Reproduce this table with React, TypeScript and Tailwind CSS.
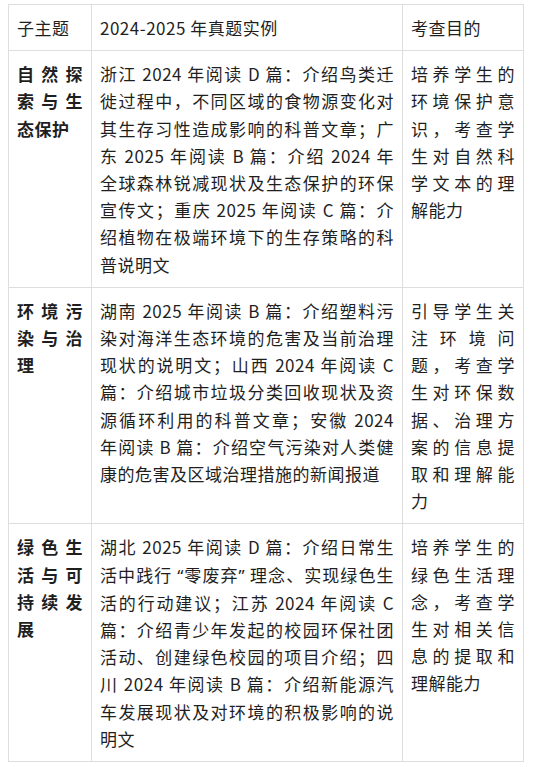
import type { ReactNode } from "react";

type Row = {
  topic: ReactNode[];
  examples: ReactNode[];
  goal: ReactNode[];
};

// latin-width curly quotes (the CJK font draws them full width)
const Q = ({ children }: { children: ReactNode }) => (
  <span style={{ fontFamily: '"Noto Sans", sans-serif' }}>{children}</span>
);

const rows: Row[] = [
  {
    topic: ["自然探", "索与生", "态保护"],
    examples: [
      "浙江 2024 年阅读 D 篇：介绍鸟类迁",
      "徙过程中，不同区域的食物源变化对",
      "其生存习性造成影响的科普文章；广",
      "东 2025 年阅读 B 篇：介绍 2024 年",
      "全球森林锐减现状及生态保护的环保",
      "宣传文；重庆 2025 年阅读 C 篇：介",
      "绍植物在极端环境下的生存策略的科",
      "普说明文",
    ],
    goal: ["培养学生的", "环境保护意", "识，考查学", "生对自然科", "学文本的理", "解能力"],
  },
  {
    topic: ["环境污", "染与治", "理"],
    examples: [
      "湖南 2025 年阅读 B 篇：介绍塑料污",
      "染对海洋生态环境的危害及当前治理",
      "现状的说明文；山西 2024 年阅读 C",
      "篇：介绍城市垃圾分类回收现状及资",
      "源循环利用的科普文章；安徽 2024",
      "年阅读 B 篇：介绍空气污染对人类健",
      "康的危害及区域治理措施的新闻报道",
    ],
    goal: ["引导学生关", "注环境问", "题，考查学", "生对环保数", "据、治理方", "案的信息提", "取和理解能", "力"],
  },
  {
    topic: ["绿色生", "活与可", "持续发", "展"],
    examples: [
      "湖北 2025 年阅读 D 篇：介绍日常生",
      <>
        活中践行 <Q>“</Q>零废弃<Q>”</Q> 理念、实现绿色生
      </>,
      "活的行动建议；江苏 2024 年阅读 C",
      "篇：介绍青少年发起的校园环保社团",
      "活动、创建绿色校园的项目介绍；四",
      "川 2024 年阅读 B 篇：介绍新能源汽",
      "车发展现状及对环境的积极影响的说",
      "明文",
    ],
    goal: ["培养学生的", "绿色生活理", "念，考查学", "生对相关信", "息的提取和", "理解能力"],
  },
];

// each wrapped line is its own block so the justified spacing matches
function Lines({ lines }: { lines: ReactNode[] }) {
  return (
    <>
      {lines.map((line, i) => (
        <div
          key={i}
          className={
            i < lines.length - 1
              ? "whitespace-nowrap text-justify [text-align-last:justify]"
              : "whitespace-nowrap text-left"
          }
        >
          {line}
        </div>
      ))}
    </>
  );
}

const cell = "border border-[#dedede] px-2 py-[9px] align-top";

export default function App() {
  return (
    <div
      className="min-h-[767px] bg-white pl-2 pt-1 text-[17px] leading-[27.2px] tracking-[0.5px] text-[#1f1f1f]"
      style={{ fontFamily: '"Noto Sans CJK SC", "Noto Sans", sans-serif' }}
    >
      <table className="w-[515px] table-fixed border-collapse">
        <colgroup>
          <col className="w-[83px]" />
          <col className="w-[311px]" />
          <col className="w-[121px]" />
        </colgroup>
        <thead>
          <tr>
            <th className={`${cell} text-left font-normal`}>子主题</th>
            <th className={`${cell} text-left font-normal`}>2024-2025 年真题实例</th>
            <th className={`${cell} text-left font-normal`}>考查目的</th>
          </tr>
        </thead>
        <tbody>
          {rows.map((row, i) => (
            <tr key={i}>
              <td className={`${cell} font-bold`}>
                <Lines lines={row.topic} />
              </td>
              <td className={cell}>
                <Lines lines={row.examples} />
              </td>
              <td className={cell}>
                <Lines lines={row.goal} />
              </td>
            </tr>
          ))}
        </tbody>
      </table>
    </div>
  );
}
